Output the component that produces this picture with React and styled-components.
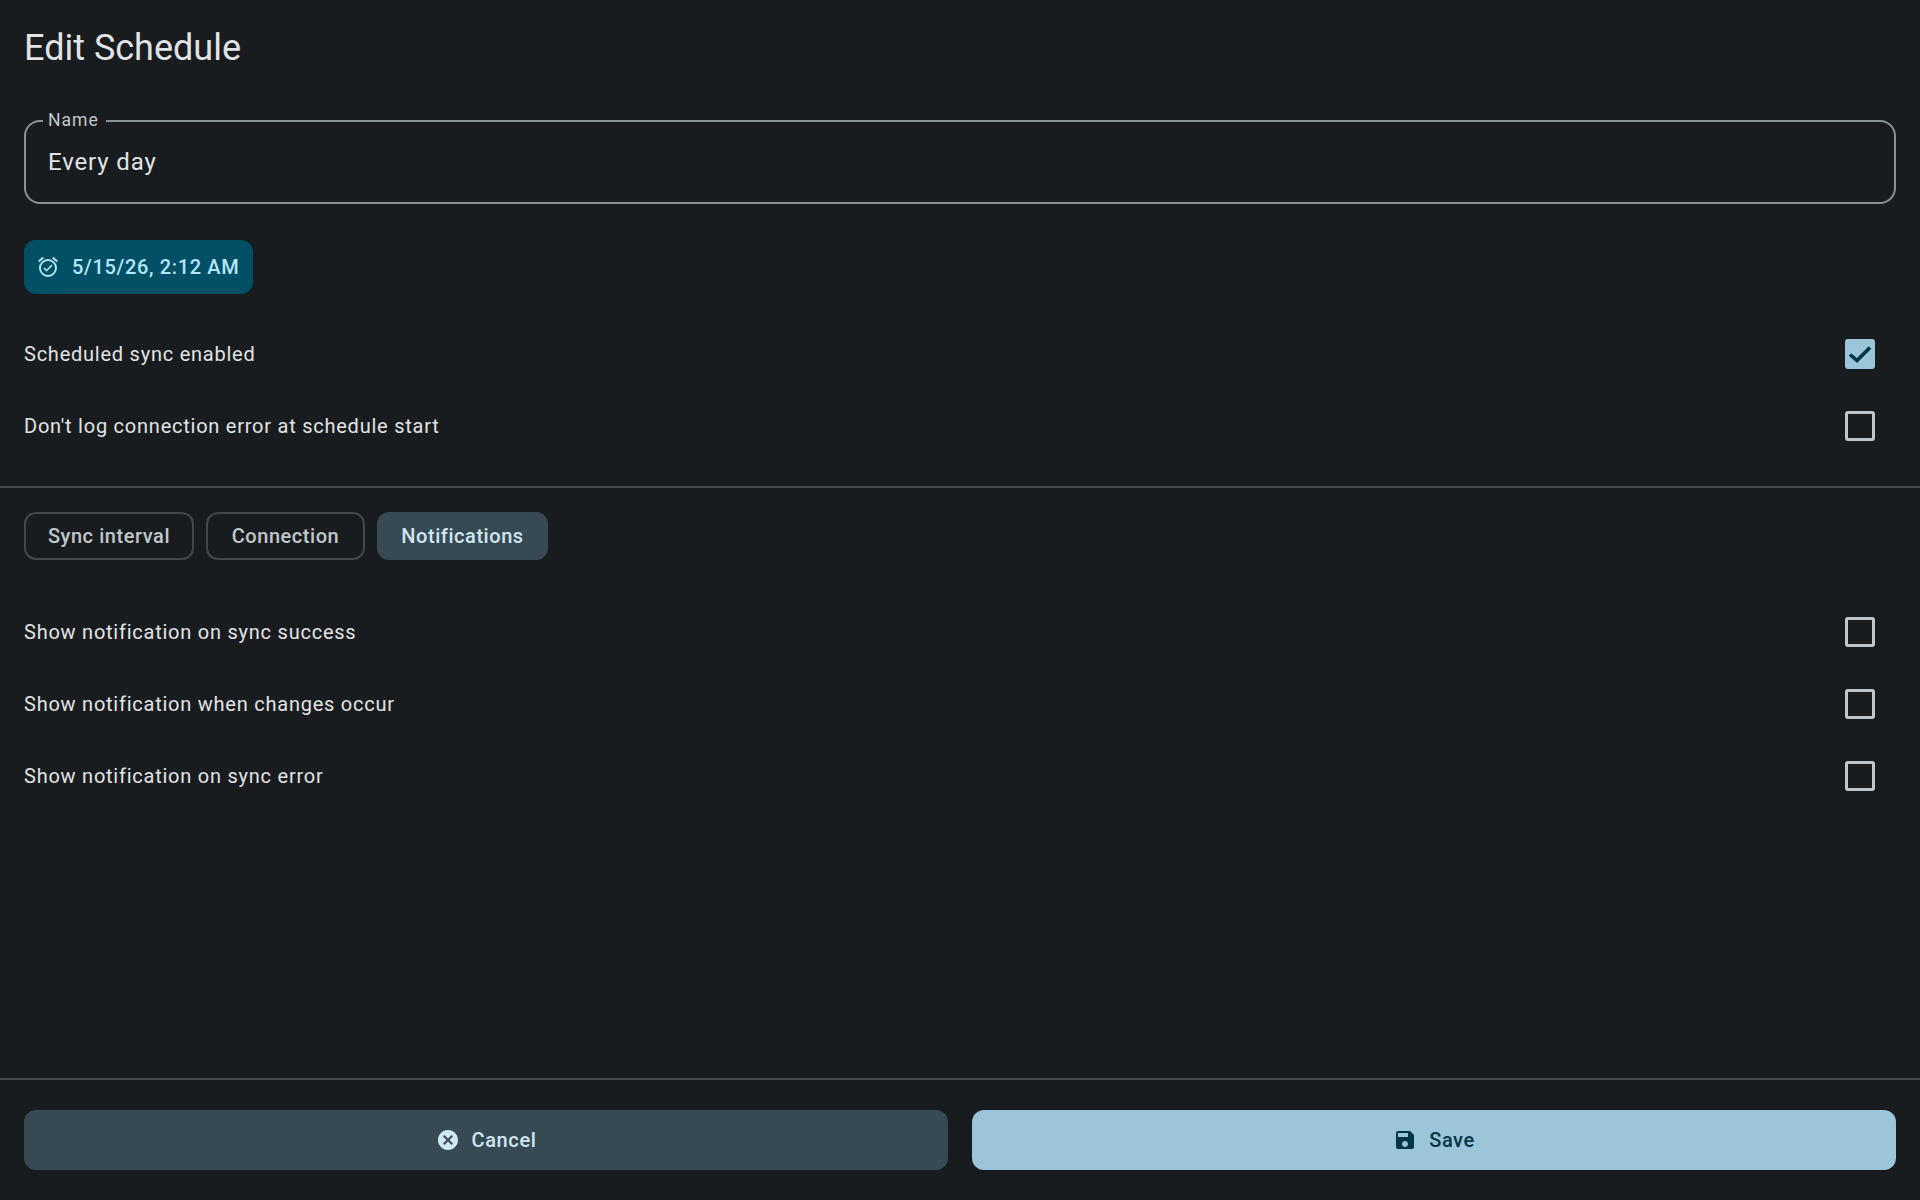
import React from "react";
import styled, { createGlobalStyle } from "styled-components";
import { MdOutlineAlarmOn, MdCancel, MdSave } from "react-icons/md";

const Global = createGlobalStyle`
  html, body { margin: 0; padding: 0; background: #191c1e; }
  * { box-sizing: border-box; }
`;

const Page = styled.div`
  height: 1200px;
  display: flex;
  flex-direction: column;
  background: #191c1e;
  color: #e1e3e5;
  font-family: Roboto, "Liberation Sans", sans-serif;
`;
const Content = styled.main`
  flex: 1;
  display: flex;
  flex-direction: column;
`;
const Title = styled.h1`
  margin: 0;
  padding: 25px 24px 0;
  height: 121px;
  font-size: 36px;
  line-height: 46px;
  font-weight: 400;
  color: #e1e3e5;
`;
const FieldBox = styled.fieldset`
  margin: -11px 24px 0;
  padding: 0 22px;
  height: 94px;
  border: 2px solid #8b9296;
  border-radius: 16px;
`;
const FieldLegend = styled.legend`
  margin-left: -5px;
  padding: 0 7px 2px 5px;
  font-size: 17.6px;
  line-height: 20px;
  letter-spacing: 1px;
  color: #c0c7cc;
`;
const FieldValue = styled.div`
  font-size: 24px;
  line-height: 28px;
  letter-spacing: 0.85px;
  color: #e1e3e5;
  margin-top: 16px;
`;
const Chip = styled.div`
  align-self: flex-start;
  margin: 36px 24px 24px;
  height: 54px;
  width: 229px;
  padding: 0 12px;
  display: flex;
  align-items: center;
  gap: 12px;
  border-radius: 12px;
  background: #004f65;
  color: #b4e6fb;
  font-size: 20px;
  font-weight: 500;
  letter-spacing: 0.65px;
  white-space: nowrap;
  svg { font-size: 24px; flex: none; }
`;
const Row = styled.label`
  height: 72px;
  padding: 0 45px 0 24px;
  display: flex;
  align-items: center;
  justify-content: space-between;
  font-size: 20px;
  letter-spacing: 0.76px;
  color: #e1e3e5;
`;
const Box = styled.span`
  width: 30px;
  height: 30px;
  border-radius: 3px;
  border: ${p => (p.$on ? "0" : "3px solid #c0c7cc")};
  background: ${p => (p.$on ? "#9bc6da" : "transparent")};
  display: block;
`;
const Tick = styled.svg`
  display: block;
  width: 30px;
  height: 30px;
  fill: none;
  stroke: #003546;
  stroke-width: 3.6;
`;
const Divider = styled.hr`
  margin: 24px 0 0;
  border: 0;
  height: 2px;
  background: #44474c;
`;
const Tabs = styled.div`
  display: flex;
  gap: 12px;
  padding: 24px 24px 36px;
`;
const Tab = styled.button`
  width: ${p => p.$w}px;
  height: 48px;
  padding: 0;
  border-radius: 12px;
  border: ${p => (p.$on ? "0" : "2px solid #44474c")};
  background: ${p => (p.$on ? "#374a54" : "transparent")};
  color: ${p => (p.$on ? "#d0e6f2" : "#c0c7cc")};
  font-family: inherit;
  font-size: 20px;
  font-weight: 500;
  letter-spacing: 0.55px;
`;
const Footer = styled.footer`
  height: 122px;
  border-top: 2px solid #44474c;
  padding: 30px 24px 0;
  display: grid;
  grid-template-columns: 1fr 1fr;
  gap: 24px;
  align-content: start;
`;
const Action = styled.button`
  height: 60px;
  border: 0;
  border-radius: 12px;
  background: ${p => (p.$primary ? "#9bc6da" : "#374a54")};
  color: ${p => (p.$primary ? "#003546" : "#d0e6f2")};
  font-family: inherit;
  font-size: 20px;
  font-weight: 500;
  letter-spacing: 0.6px;
  display: flex;
  align-items: center;
  justify-content: center;
  gap: 12px;
  svg { font-size: 24px; flex: none; }
`;

const Check = ({ on, children }) => (
  <Row>
    <span>{children}</span>
    <Box $on={on}>
      {on && (
        <Tick viewBox="0 0 30 30">
          <path d="M5 15.5 L12 21.5 L25 8.5" />
        </Tick>
      )}
    </Box>
  </Row>
);

export default function App() {
  return (
    <Page>
      <Global />
      <Content>
        <Title>Edit Schedule</Title>
        <FieldBox>
          <FieldLegend>Name</FieldLegend>
          <FieldValue>Every day</FieldValue>
        </FieldBox>
        <Chip>
          <MdOutlineAlarmOn />
          5/15/26, 2:12 AM
        </Chip>
        <Check on>Scheduled sync enabled</Check>
        <Check>Don't log connection error at schedule start</Check>
        <Divider />
        <Tabs>
          <Tab $w={170}>Sync interval</Tab>
          <Tab $w={159}>Connection</Tab>
          <Tab $w={171} $on>Notifications</Tab>
        </Tabs>
        <Check>Show notification on sync success</Check>
        <Check>Show notification when changes occur</Check>
        <Check>Show notification on sync error</Check>
      </Content>
      <Footer>
        <Action><MdCancel />Cancel</Action>
        <Action $primary><MdSave />Save</Action>
      </Footer>
    </Page>
  );
}
